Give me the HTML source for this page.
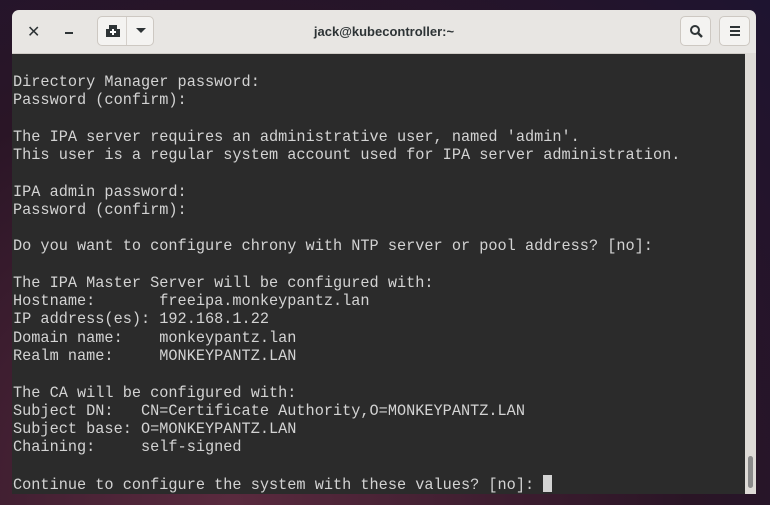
<!DOCTYPE html>
<html><head><style>
body{margin:0;width:770px;height:505px;overflow:hidden;background:radial-gradient(ellipse at 30% 100%,#5a2a3e,#2a1526 60%,#1e1430);position:relative;font-family:"Liberation Sans",sans-serif}
.win{position:absolute;left:12px;top:10px;width:744px;height:484px;background:#2b2b2b;border-radius:7px 7px 0 0;overflow:hidden}
.tb{position:absolute;left:0;top:0;right:0;height:43px;background:#e8e6e3;border-bottom:1px solid #cfcbc6}
.title{position:absolute;left:0;right:0;top:14px;text-align:center;font-size:13px;font-weight:bold;color:#2e3436}
.btn{position:absolute;top:6px;height:30px;background:#f4f3f1;border:1px solid #cdc8c2;border-radius:5px;box-sizing:border-box}
pre{position:absolute;left:1px;top:63px;margin:0;font-family:"Liberation Mono",monospace;font-size:15.24px;line-height:18.27px;color:#d3d3d3}
.cur{display:inline-block;width:9px;height:17px;background:#d3d3d3;vertical-align:-3px}
.sb{position:absolute;left:733px;top:43px;width:11px;bottom:0;background:#dedbd7}
.th{position:absolute;left:3px;width:5px;bottom:6px;height:32px;background:#8a8a8a;border-radius:3px}
</style></head><body>
<div class="win">
<div class="tb">
<div style="position:absolute;left:15px;top:12px;font-size:16px;color:#2e3436">✕</div>
<div style="position:absolute;left:53px;top:22px;width:8px;height:2px;background:#2e3436"></div>
<div class="btn" style="left:85px;width:57px">
<div style="position:absolute;left:28px;top:0;bottom:0;width:1px;background:#d5d0cb"></div>
<svg style="position:absolute;left:8px;top:7px" width="14" height="14"><path d="M3 1h8v4h3v8H0V5h3z" fill="#2e3436"/><path d="M7 5v6M4 8h6" stroke="#fff" stroke-width="2"/></svg>
<svg style="position:absolute;left:38px;top:11px" width="10" height="6"><path d="M0 0h10L5 5z" fill="#2e3436"/></svg>
</div>
<div class="btn" style="left:668px;width:31px"><svg style="position:absolute;left:8px;top:7px" width="15" height="15"><circle cx="6" cy="6" r="4" stroke="#2e3436" stroke-width="2" fill="none"/><path d="M9 9l4 4" stroke="#2e3436" stroke-width="2.4"/></svg></div>
<div class="btn" style="left:707px;width:31px"><svg style="position:absolute;left:9px;top:8px" width="12" height="12"><path d="M1 2h10M1 6h10M1 10h10" stroke="#2e3436" stroke-width="2"/></svg></div>
<div class="title">jack@kubecontroller:~</div>
</div>
<pre>Directory Manager password:
Password (confirm):

The IPA server requires an administrative user, named 'admin'.
This user is a regular system account used for IPA server administration.

IPA admin password:
Password (confirm):

Do you want to configure chrony with NTP server or pool address? [no]:

The IPA Master Server will be configured with:
Hostname:       freeipa.monkeypantz.lan
IP address(es): 192.168.1.22
Domain name:    monkeypantz.lan
Realm name:     MONKEYPANTZ.LAN

The CA will be configured with:
Subject DN:   CN=Certificate Authority,O=MONKEYPANTZ.LAN
Subject base: O=MONKEYPANTZ.LAN
Chaining:     self-signed

Continue to configure the system with these values? [no]: <span class="cur"></span></pre>
<div class="sb"><div class="th"></div></div>
</div>
</body></html>
